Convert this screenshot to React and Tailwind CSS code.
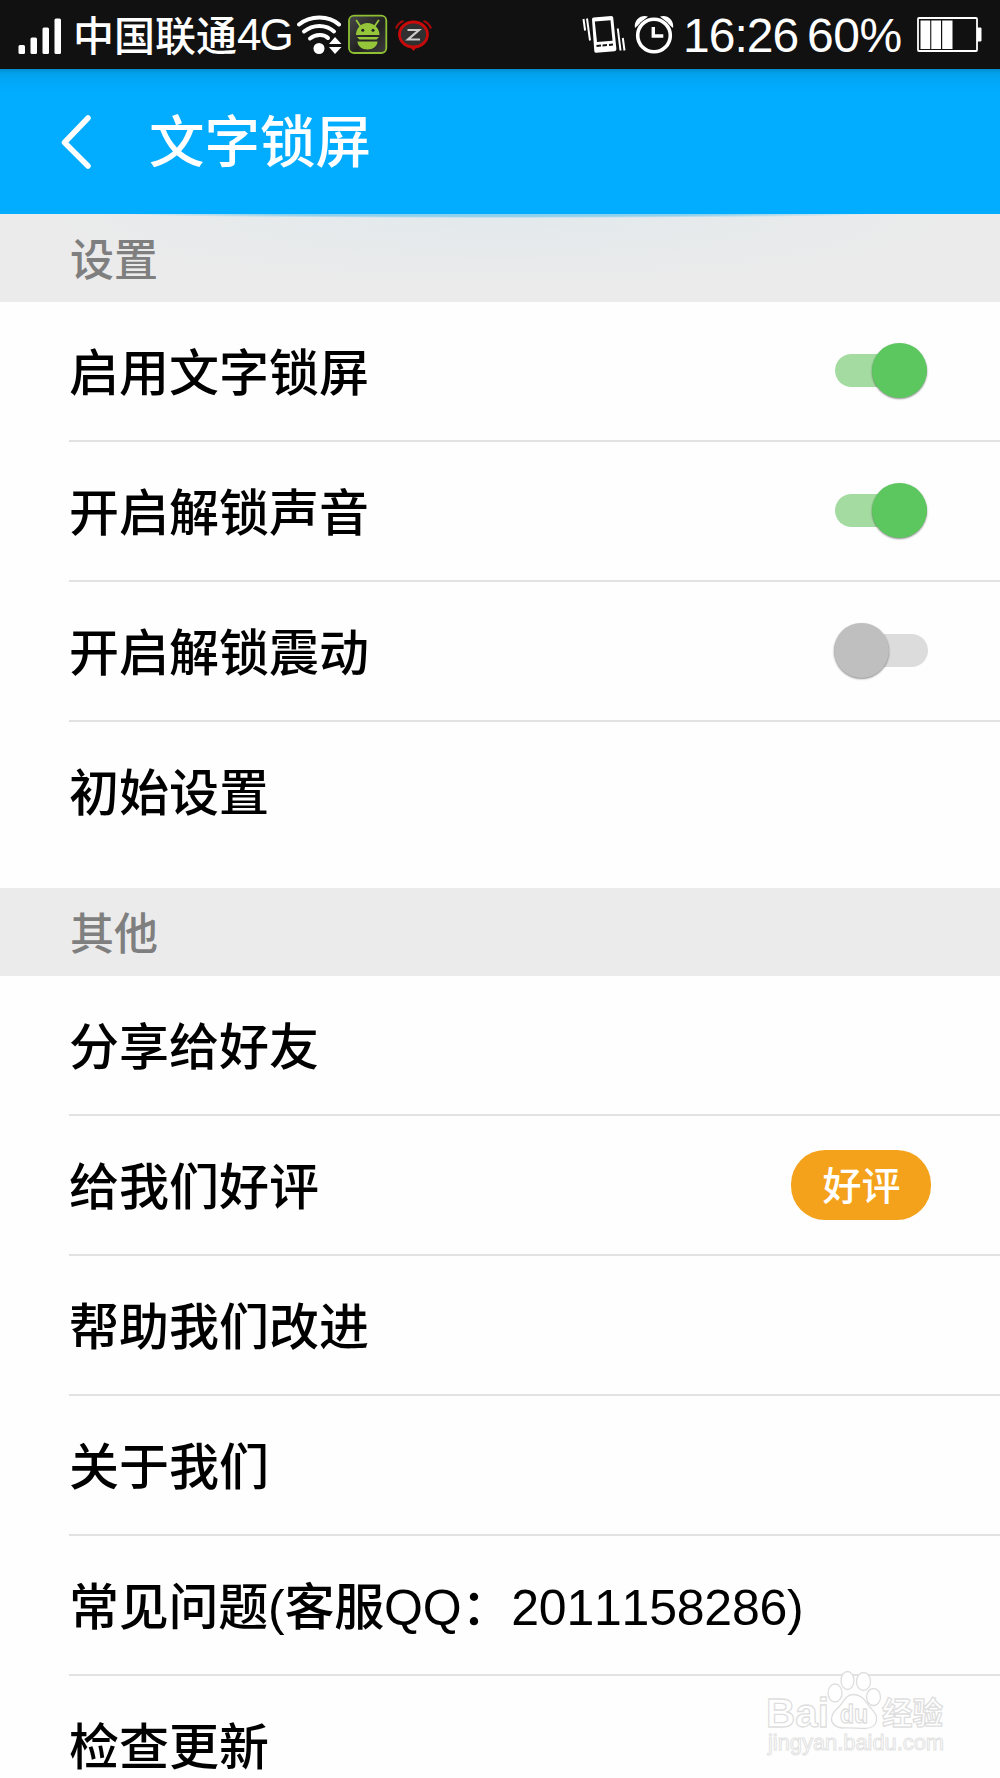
import React from 'react';

const SETTINGS = [
    { label: '启用文字锁屏', toggle: 'on' },
    { label: '开启解锁声音', toggle: 'on' },
    { label: '开启解锁震动', toggle: 'off' },
    { label: '初始设置' },
];

const OTHERS = [
    { label: '分享给好友' },
    { label: '给我们好评', badge: '好评' },
    { label: '帮助我们改进' },
    { label: '关于我们' },
    { label: '常见问题(客服QQ：2011158286)', tight: true },
    { label: '检查更新' },
];

const SignalIcon = () => (
    <svg className="w-11 h-[69px] ml-[18px]" viewBox="0 0 44 69" fill="#fff">
        <rect x="0.5" y="45" width="6.5" height="9" rx="1.5" />
        <rect x="12.5" y="37.5" width="6.5" height="16.5" rx="1.5" />
        <rect x="24.5" y="27.5" width="6.5" height="26.5" rx="1.5" />
        <rect x="36.5" y="18.5" width="6.5" height="35.5" rx="1.5" />
    </svg>
);

const WifiIcon = () => (
    <svg className="w-[46px] h-[69px] ml-[5px]" viewBox="0 0 46 69" fill="none" stroke="#fff" strokeWidth="4" strokeLinecap="round">
        <path d="M2 24.5C13 15 32 15 42 24.5" />
        <path d="M7 31.5C16 24 29 24 37 31.5" />
        <path d="M13 38.5C19 34 27 34 31 38" />
        <circle cx="22" cy="48.5" r="5.5" fill="#fff" stroke="none" />
        <path d="M32 44l6-7 6.5 7zM32 47l6 7 6.5-7z" fill="#fff" stroke="none" />
    </svg>
);

const RobotIcon = () => (
    <svg className="w-10 h-[69px] ml-[5px]" viewBox="0 0 40 69">
        <defs>
            <linearGradient id="robot-bg" x1="0" y1="0" x2="1" y2="1">
                <stop offset="0" stopColor="#484848" />
                <stop offset="0.55" stopColor="#222" />
                <stop offset="1" stopColor="#3c3c3c" />
            </linearGradient>
        </defs>
        <rect x="1" y="15.7" width="37.3" height="37.3" rx="5" fill="url(#robot-bg)" stroke="#8fbf33" strokeWidth="1.8" />
        <path d="M8.5 20.5l4 6M30.5 20.5l-4 6" stroke="#95c63a" strokeWidth="1.8" strokeLinecap="round" />
        <path d="M8 35c0-7 5-12 11.5-12S31.5 28 31.5 35z" fill="#95c63a" />
        <path d="M9 37h22l-2.500 2.500h-17zM9.500 41.500h20c0 4.500-4.500 8-10 8s-10-3.500-10-8z" fill="#95c63a" />
        <circle cx="14.8" cy="30.3" r="1.5" fill="#222" />
        <circle cx="25" cy="30.3" r="1.5" fill="#222" />
    </svg>
);

const BubbleIcon = () => (
    <svg className="w-[38px] h-[69px] ml-[7px]" viewBox="0 0 38 69" fill="none">
        <path d="M14.500 46l4 5 4-5z" fill="#c90a0a" />
        <ellipse cx="18.500" cy="34.500" rx="14" ry="12.500" fill="#303030" stroke="#c90a0a" strokeWidth="2.800" />
        <path d="M1 28.500C2.500 25 5 22 8.500 21M36 28.500C34.500 25 32 22 28.500 21" stroke="#a80a0a" strokeWidth="2.200" />
        <path d="M12.500 30h11.500l-11 9.500h12" stroke="#ccc" strokeWidth="2.200" />
    </svg>
);

const VibrateIcon = () => (
    <svg className="w-11 h-[69px]" viewBox="0 0 44 69" fill="none" stroke="#fff">
        <path d="M1.500 19l1.600 11.500M5 18.500l3 22M35.800 28.500l2.700 22M40.800 38l1.700 12.500" strokeWidth="2" />
        <path d="M11.500 17.500l18-1.500q1.500 0 1.700 1.500l3.200 31.500q0 2-1.800 2.200l-18.500 1.500q-1.500 0-1.800-1.500L10 19.500q0-2 1.500-2z" fill="#fff" stroke="none" />
        <path d="M12.800 21.500l15.700-1.300 2 20.500-15.500 1.300z" fill="#111" stroke="none" />
        <path d="M14.500 46l4.500-.4M20.500 45.500l4.500-.4M27 45l4-.4" stroke="#111" strokeWidth="2" />
    </svg>
);

const AlarmIcon = () => (
    <svg className="w-10 h-[69px] ml-2" viewBox="0 0 40 69" fill="none" stroke="#fff">
        <path d="M1 28c-1.500-7 5-14 13-11.500zM39 28c1.500-7-5-14-13-11.500z" fill="#fff" stroke="none" />
        <circle cx="20" cy="35.500" r="18.700" fill="#111" stroke="none" />
        <circle cx="20" cy="35.500" r="16.300" strokeWidth="3.600" />
        <path d="M19.300 27v9h10" strokeWidth="3.400" />
    </svg>
);

const BatteryIcon = () => (
    <svg className="w-[66px] h-[69px]" viewBox="0 0 66 69" fill="none">
        <rect x="1" y="18" width="59" height="33" rx="1" stroke="#fff" strokeWidth="1.800" />
        <path d="M3.500 20.500h9.700v28.500H3.500zM14.300 20.500h9.700v28.500h-9.700zM25.200 20.500h10.300v28.500H25.200z" fill="#fff" />
        <path d="M60.500 28h3.500v13h-3.500z" fill="#fff" stroke="#fff" />
    </svg>
);

const StatusBar = () => (
    <div className="h-[69px] bg-[#111] text-white flex items-center">
        <SignalIcon />
        <span className="ml-[11px] text-[41px] leading-[69px] font-medium mt-[5px]">中国联通</span>
        <span className="w-[55px] text-[44px] leading-[69px] tracking-[-2px] whitespace-nowrap">4G</span>
        <WifiIcon />
        <RobotIcon />
        <BubbleIcon />
        <div className="ml-auto flex items-center">
            <VibrateIcon />
            <AlarmIcon />
            <span className="ml-[9px] w-[124px] text-[48px] leading-[69px] mt-0.5 tracking-[-1px] whitespace-nowrap">16:26</span>
            <span className="w-[110px] text-[48px] leading-[69px] mt-0.5 tracking-[-0.5px] whitespace-nowrap">60%</span>
            <BatteryIcon />
        </div>
        <div className="w-[17px]" />
    </div>
);

const Toggle = ({ on }) => (
    <div className="relative w-[94px] h-14 flex items-center -mt-px">
        <div className={`w-full h-[33px] rounded-full ${on ? 'mx-px bg-[#a4dba1]' : 'bg-[#dcdcdc]'}`} />
        <div
            className={`absolute top-0 size-[55px] rounded-full shadow-[0_1px_2px_rgba(0,0,0,0.45)] ${on ? 'right-px bg-[#5cc75f]' : 'left-0 bg-[#bfbfbf]'}`}
        />
    </div>
);

const SectionTitle = ({ children, className = '' }) => (
    <div className={`h-[88px] pl-[70px] bg-[#ebebeb] text-[#7f7f7f] text-[44px] leading-[93px] font-medium ${className}`}>
        {children}
    </div>
);

const Row = ({ item, last }) => (
    <div className={`ml-[69px] h-[140px] flex items-center justify-between ${last ? '' : 'border-b-2 border-[#e2e2e2]'}`}>
        <span
            className={`text-[50px] leading-[130px] font-medium text-black whitespace-nowrap ${last ? 'pt-[3px]' : 'pt-[5px]'} ${item.tight ? 'tracking-[-0.22px]' : ''}`}
        >
            {item.label}
        </span>
        {item.toggle && (
            <div className="mr-[72px]">
                <Toggle on={item.toggle === 'on'} />
            </div>
        )}
        {item.badge && (
            <button className="mr-[69px] w-[140px] h-[70px] pt-[3px] pl-px rounded-[34px] bg-[#f4a21b] text-white text-[39px] leading-[67px] font-medium">
                {item.badge}
            </button>
        )}
    </div>
);

const Watermark = () => (
    <svg
        className="absolute left-[760px] top-[1664px] w-[200px] h-[100px]"
        viewBox="0 0 200 100"
        fill="#fff"
        stroke="#dedede"
        strokeWidth="1.300"
    >
        <text x="6" y="63" fontSize="41" fontWeight="700" textLength="63" lengthAdjust="spacingAndGlyphs">Bai</text>
        <ellipse cx="75" cy="29" rx="7" ry="9" />
        <ellipse cx="87.500" cy="16.500" rx="6.500" ry="9" />
        <ellipse cx="103.500" cy="17.500" rx="7" ry="9" />
        <ellipse cx="113.500" cy="33" rx="7" ry="8.500" />
        <path d="M93.500 30.500c9 0 12 7 16 12 4 5 8 8 7 14-1 6-7 8-12 8-6 0-16-1-22-0.500-6 0-11-4-11-9 0-7 5-9 9-14 4-5 6-10.500 13-10.500z" />
        <text x="80" y="58.500" fontSize="25" fontWeight="700" textLength="28" lengthAdjust="spacingAndGlyphs">du</text>
        <text x="122" y="60" fontSize="31" fontWeight="700" textLength="61" lengthAdjust="spacingAndGlyphs">经验</text>
        <text x="8" y="86" fontSize="22" strokeWidth="1" stroke="#e2e2e2" textLength="176" lengthAdjust="spacingAndGlyphs">jingyan.baidu.com</text>
    </svg>
);

export default function App() {
    return (
        <div className="relative w-[1000px] h-[1778px] overflow-hidden bg-[#fefefe] [font-kerning:none] font-['Liberation_Sans','Noto_Sans_CJK_SC',sans-serif]">
            <StatusBar />
            <header className="h-[145px] flex items-center bg-[#02adff] bg-[linear-gradient(#048ccd_0,#03a0ea_4px,#02a9fa_14px,#02adff_26px)] text-white">
                <svg className="ml-[60px] w-8 h-14" viewBox="0 0 32 56" fill="none" stroke="#fff" strokeWidth="5.5" strokeLinecap="round" strokeLinejoin="round">
                    <path d="M28 4L4.500 28.500L28 52" />
                </svg>
                <h1 className="ml-[57px] pt-[3px] text-[55.5px] leading-[140px] font-medium">文字锁屏</h1>
            </header>
            <SectionTitle className="bg-[radial-gradient(ellipse_38%_4px_at_50%_0,#8fd0ec_60%,transparent),radial-gradient(ellipse_46%_70px_at_50%_0,#e2e9ec,#ebebeb)]">设置</SectionTitle>
            <div className="pb-[26px]">
                {SETTINGS.map((item, i) => (
                    <Row key={item.label} item={item} last={i === SETTINGS.length - 1} />
                ))}
            </div>
            <SectionTitle>其他</SectionTitle>
            <div>
                {OTHERS.map((item, i) => (
                    <Row key={item.label} item={item} last={i === OTHERS.length - 1} />
                ))}
            </div>
            <Watermark />
        </div>
    );
}
